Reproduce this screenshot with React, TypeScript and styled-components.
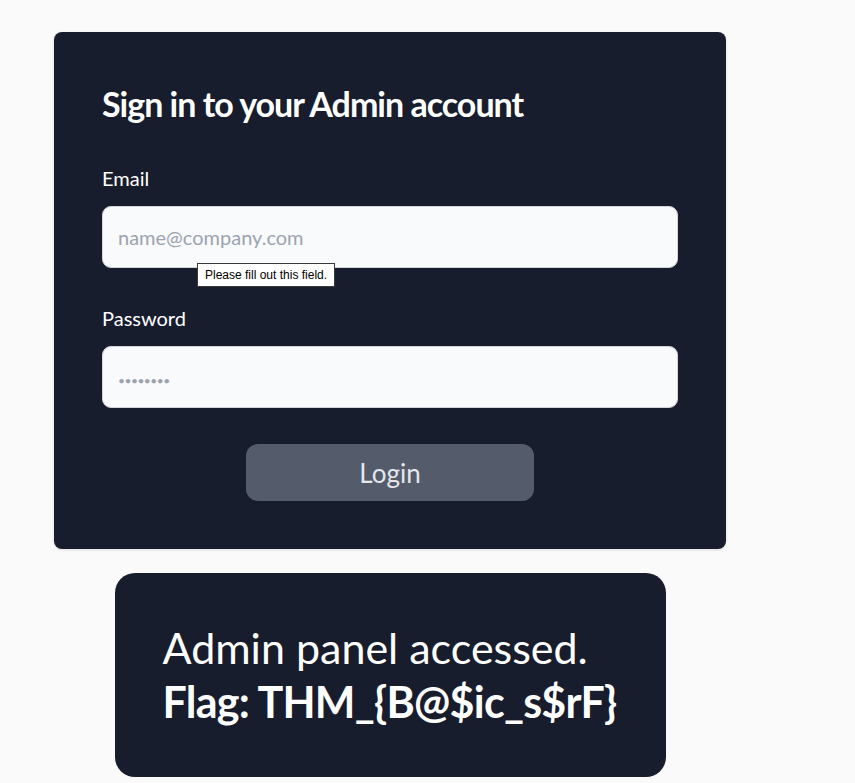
import React from 'react';
import styled, { createGlobalStyle } from 'styled-components';

const GlobalStyle = createGlobalStyle`
  html, body {
    margin: 0;
    padding: 0;
    background: #fafafa;
  }
  body {
    font-family: Lato, "Noto Sans", "Liberation Sans", sans-serif;
  }
  * {
    box-sizing: border-box;
  }
`;

const Page = styled.div`
  padding: 32px 0 0 54px;
`;

const Column = styled.div`
  width: 672px;
  display: flex;
  flex-direction: column;
  align-items: center;
  gap: 24px;
`;

const Card = styled.form`
  width: 100%;
  background: #171d2d;
  border-radius: 8px;
  padding: 48px;
  box-shadow: 0 1px 3px rgba(0, 0, 0, 0.12);
`;

const Title = styled.h1`
  margin: 0 0 38px;
  font-size: 34px;
  line-height: 48px;
  font-weight: 700;
  letter-spacing: -1px;
  color: #ffffff;
`;

const Field = styled.div`
  position: relative;

  & + & {
    margin-top: 38px;
  }
`;

const Label = styled.label`
  display: block;
  font-size: 20px;
  line-height: 24px;
  color: #ffffff;
  margin-bottom: 16px;
`;

const Input = styled.input<{ $dots?: boolean }>`
  display: block;
  width: 100%;
  height: 62px;
  padding: 0 15px;
  border: 1px solid #d1d5db;
  border-radius: 9px;
  background: #f8fafc;
  font-family: inherit;
  font-size: 20px;
  color: #111827;
  outline: none;

  &::placeholder {
    color: #9ca3af;
    font-size: ${(p) => (p.$dots ? '12px' : '20px')};
    letter-spacing: ${(p) => (p.$dots ? '-0.5px' : '0')};
  }
`;

const Tooltip = styled.div`
  position: absolute;
  left: 95px;
  top: 97px;
  padding: 2px 7px;
  background: #ffffff;
  border: 1px solid #3a3a3a;
  font-family: "Liberation Sans", Arial, sans-serif;
  font-size: 12px;
  line-height: 18px;
  color: #000000;
  white-space: nowrap;
`;

const Actions = styled.div`
  display: flex;
  justify-content: center;
  margin-top: 36px;
`;

const Button = styled.button`
  width: 288px;
  height: 57px;
  border: none;
  border-radius: 12px;
  background: #545b6b;
  color: #e5e7eb;
  font-family: inherit;
  font-size: 26px;
  cursor: pointer;
`;

const FlagBox = styled.div`
  width: 551px;
  height: 204px;
  background: #171d2d;
  border-radius: 20px;
  padding: 0 48px;
  display: flex;
  flex-direction: column;
  justify-content: center;
  color: #ffffff;
  font-size: 43px;
  line-height: 54px;
`;

const FlagLine = styled.div<{ $bold?: boolean }>`
  white-space: nowrap;
  font-weight: ${(p) => (p.$bold ? 700 : 400)};
  letter-spacing: ${(p) => (p.$bold ? '-0.75px' : '0')};
`;

const App: React.FC = () => {
  return (
    <>
      <GlobalStyle />
      <Page>
        <Column>
          <Card onSubmit={(e) => e.preventDefault()}>
            <Title>Sign in to your Admin account</Title>
            <Field>
              <Label htmlFor="email">Email</Label>
              <Input id="email" type="email" placeholder="name@company.com" />
              <Tooltip>Please fill out this field.</Tooltip>
            </Field>
            <Field>
              <Label htmlFor="password">Password</Label>
              <Input id="password" type="password" placeholder="••••••••" $dots />
            </Field>
            <Actions>
              <Button type="submit">Login</Button>
            </Actions>
          </Card>
          <FlagBox>
            <FlagLine>Admin panel accessed.</FlagLine>
            <FlagLine $bold>Flag: THM_{'{'}B@$ic_s$rF{'}'}</FlagLine>
          </FlagBox>
        </Column>
      </Page>
    </>
  );
};

export default App;
